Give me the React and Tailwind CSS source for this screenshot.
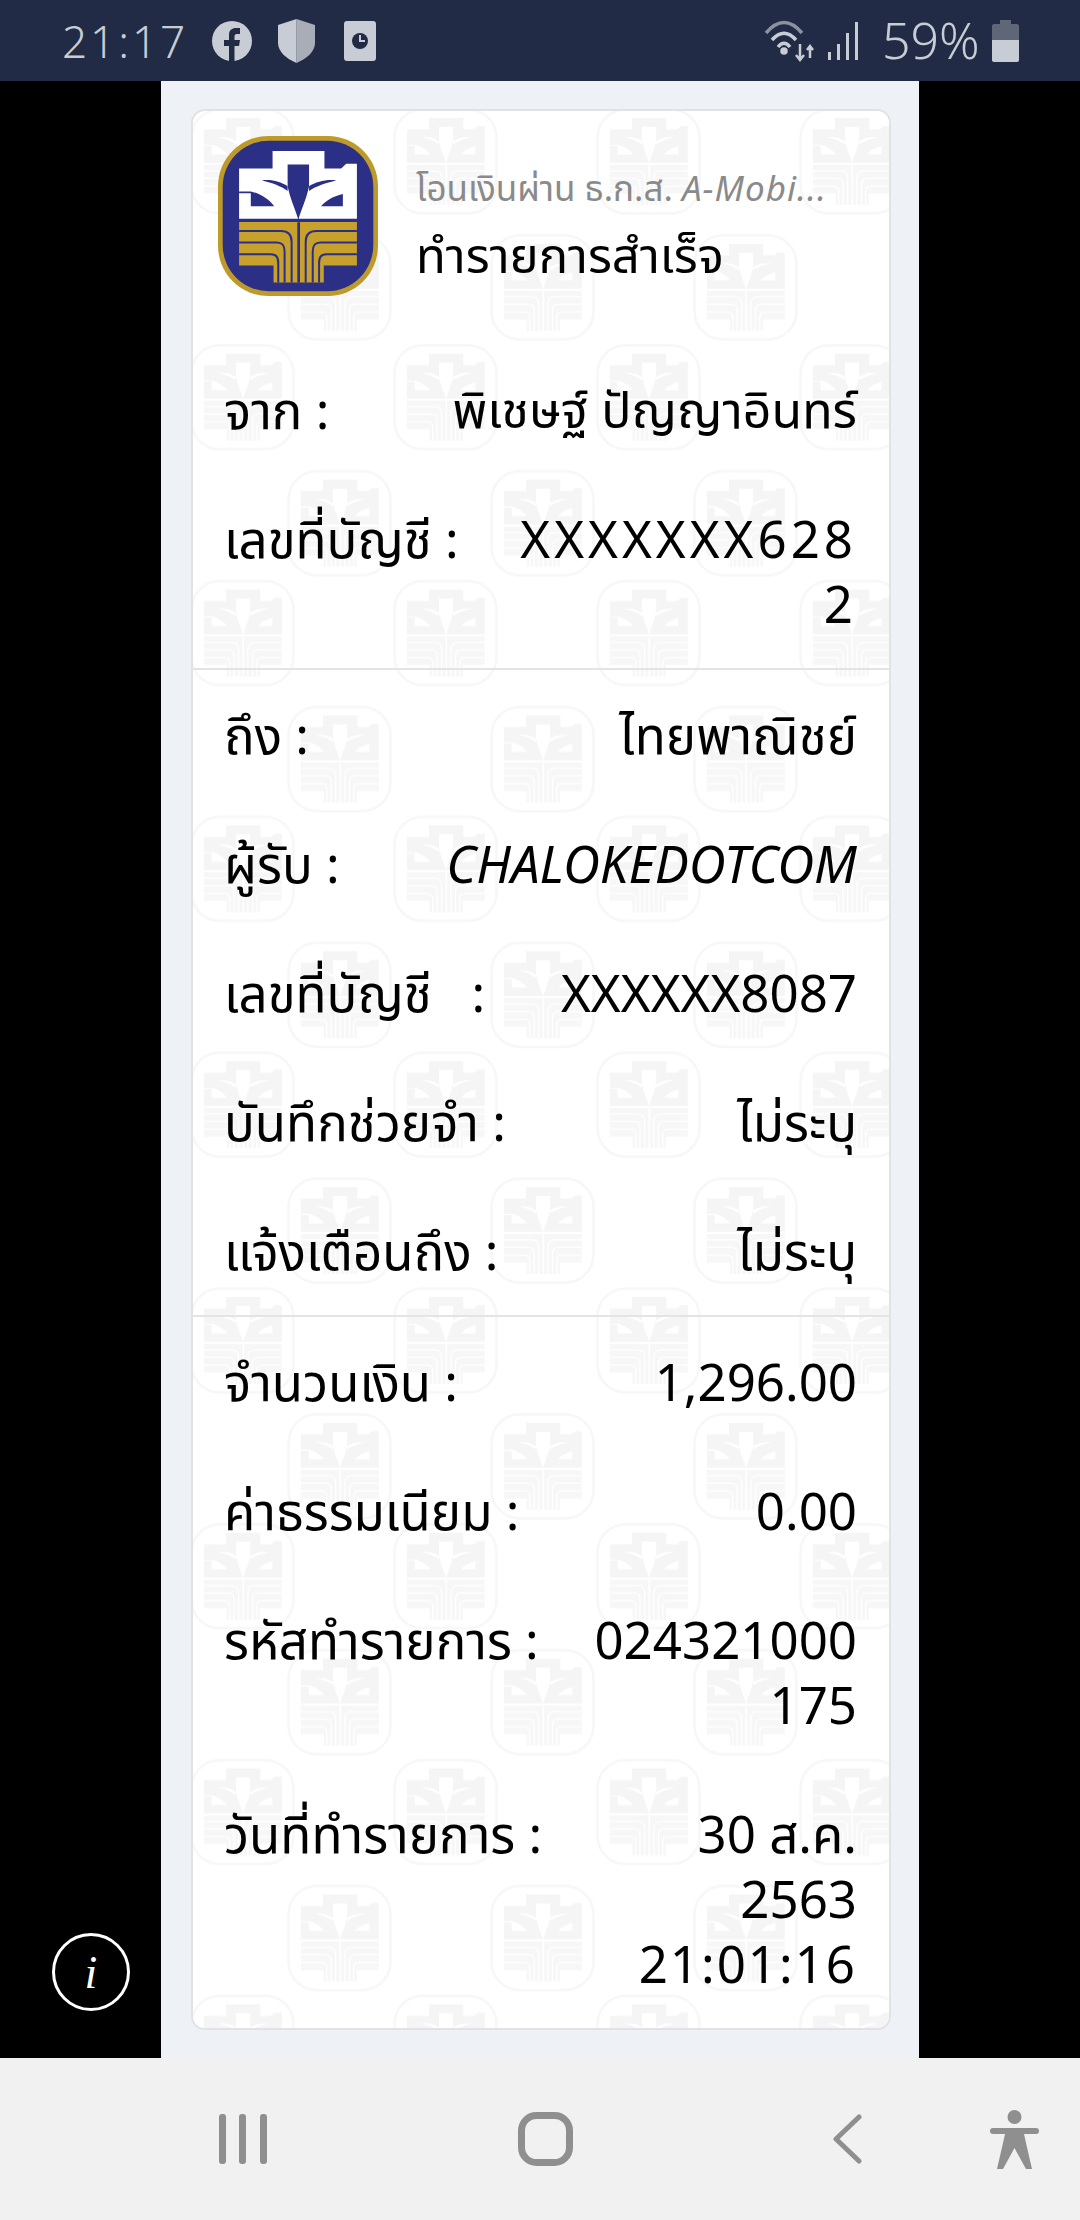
import React from 'react';

const FONT = "font-['Noto_Sans','Noto_Sans_Thai','Liberation_Sans',sans-serif]";

// drawn in the coordinates of the logo crop, 82,50 is its top left corner
function LogoMark({ white, wedge, gold, line }) {
    return (
        <g transform="translate(-82 -50)">
            <path d="M145 147H245V95H400V147H450L465 133H497V297H145Z" fill={white} />
            <path d="M290 135H354V200C346 240 330 270 322 300C314 270 298 240 290 200Z" fill={wedge} />
            <path d="M213 183C240 178 268 186 290 200V214C270 200 245 190 213 183Z" fill={wedge} />
            <path d="M435 183C410 178 376 186 354 200V214C375 200 405 190 435 183Z" fill={wedge} />
            <path d="M145 216H180C210 222 235 240 250 260H180V221H145Z" fill={wedge} />
            <path d="M455 223C425 230 400 245 390 260H455Z" fill={wedge} />
            <path d="M145 307H497V437H398V488H248V437H145Z" fill={gold} />
            <g fill="none" stroke={line} strokeWidth="6">
                <path d="M145 334H270C292 334 302 344 302 366V488" />
                <path d="M145 368H258C276 368 281 378 281 396V488" />
                <path d="M145 403H240C256 403 262 412 262 428V488" />
                <path d="M497 334H376C354 334 344 344 344 366V488" />
                <path d="M497 368H388C370 368 365 378 365 396V488" />
                <path d="M497 403H406C390 403 384 412 384 428V488" />
                <path d="M323 308V488" strokeWidth="8" />
            </g>
        </g>
    );
}

function Logo() {
    return (
        <svg viewBox="0 0 478 478" className="w-[160px] h-[160px] shrink-0">
            <rect x="0" y="0" width="478" height="478" rx="150" fill="#bd9a2a" />
            <rect x="14" y="14" width="450" height="450" rx="138" fill="#2b2f86" />
            <LogoMark white="#ffffff" wedge="#2b2f86" gold="#c8a02c" line="#2b2f86" />
        </svg>
    );
}

function Watermark() {
    const tile = (
        <>
            <rect x="1.500" y="1.500" width="102" height="104" rx="28" fill="#ffffff" stroke="#f7f7f7" strokeWidth="2.500" />
            <g transform="scale(0.221)">
                <LogoMark white="#f5f5f5" wedge="#ffffff" gold="#f7f7f7" line="#ffffff" />
            </g>
        </>
    );
    return (
        <svg className="absolute inset-0 w-full h-full" aria-hidden="true">
            <defs>
                <pattern id="wm" x="-3" y="-3" width="203" height="235.800" patternUnits="userSpaceOnUse">
                    <g>{tile}</g>
                    <g transform="translate(97 126)">{tile}</g>
                    <g transform="translate(-106 126)">{tile}</g>
                </pattern>
            </defs>
            <rect width="100%" height="100%" fill="url(#wm)" />
        </svg>
    );
}

function Row({ label, lines, divider, lineClass = '' }) {
    return (
        <div className={`flex justify-between pl-[31px] pr-[32px] py-[32px] ${divider ? 'border-b-2 border-[#e4e4e4]' : ''}`}>
            <div className="whitespace-pre">{label}</div>
            <div className={`text-right whitespace-nowrap ${lineClass}`}>
                {lines.map((l, i) => <div key={i}>{l}</div>)}
            </div>
        </div>
    );
}

function StatusBar() {
    return (
        <div className="h-[81px] bg-[#212b45] flex items-center text-[#c8ccd4] shrink-0 pl-[62px] pr-[61px]">
            <span className="text-[44px] font-light tracking-[3px] w-[150px]">21:17</span>
            <svg viewBox="0 0 40 40" className="w-[40px] h-[40px]">
                <circle cx="20" cy="20" r="20" fill="#c8ccd4" />
                <path d="M17 40V25H12V19H17V14C17 9 20 7 24 7H28V13H25C23 13 22.500 14 22.500 15.500V19H28L27 25H22.500V40Z" fill="#212b45" />
            </svg>
            <svg viewBox="0 0 37 44" className="w-[37px] h-[44px] ml-[26px]">
                <path d="M18.500 0L37 6V24C37 33 28 40 18.500 44Z" fill="#a8adb8" />
                <path d="M18.500 0L0 6V24C0 33 9 40 18.500 44Z" fill="#c8ccd4" />
            </svg>
            <svg viewBox="0 0 32 40" className="w-[32px] h-[40px] ml-[29px]">
                <rect width="32" height="40" rx="3" fill="#c8ccd4" />
                <circle cx="16" cy="20" r="8" fill="#212b45" />
                <path d="M15 14H17V19H21V21H15Z" fill="#c8ccd4" />
            </svg>
            <div className="flex-1" />
            <svg viewBox="0 0 53 42" className="w-[53px] h-[42px]" fill="none" stroke="#c8ccd4" strokeWidth="3.500">
                <path d="M2 13C14 -1 26 -1 38 13" stroke="#8b91a0" />
                <path d="M8 20C16 11 24 11 32 20" />
                <path d="M14 27C18 22 22 22 26 27" />
                <circle cx="20" cy="31" r="2" fill="#c8ccd4" />
                <path d="M36 24V40M32 35L36 40L40 35M46 38V26M43 30L46 26L49 30" strokeWidth="2.500" />
            </svg>
            <svg viewBox="0 0 36 38" className="w-[36px] h-[38px] ml-[11px]" fill="#c8ccd4">
                <rect x="0" y="30" width="3" height="8" />
                <rect x="9" y="22" width="3" height="16" />
                <rect x="18" y="11" width="3" height="27" />
                <rect x="27" y="0" width="3" height="38" />
            </svg>
            <span className="text-[50px] font-light ml-[18px] w-[100px] whitespace-nowrap">59%</span>
            <svg viewBox="0 0 27 42" className="w-[27px] h-[42px] ml-[10px]">
                <path d="M8 0H19V4H25C26 4 27 5 27 6V40C27 41 26 42 25 42H2C1 42 0 41 0 40V6C0 5 1 4 2 4H8Z" fill="#5f6678" />
                <path d="M0 20H27V40C27 41 26 42 25 42H2C1 42 0 41 0 40Z" fill="#c8ccd4" />
            </svg>
        </div>
    );
}

function NavBar() {
    return (
        <div className="h-[162px] bg-[#f1f1f1] shrink-0">
            <div className="flex items-center h-full">
                <svg viewBox="0 0 48 50" className="w-[48px] h-[50px] ml-[219px]" fill="#8f8f8f">
                    <rect x="0" y="0" width="7" height="50" rx="3" />
                    <rect x="20" y="0" width="7" height="50" rx="3" />
                    <rect x="41" y="0" width="7" height="50" rx="3" />
                </svg>
                <svg viewBox="0 0 55 54" className="w-[55px] h-[54px] ml-[251px]" fill="none" stroke="#8f8f8f" strokeWidth="7">
                    <rect x="3.500" y="3.500" width="48" height="47" rx="15" />
                </svg>
                <svg viewBox="0 0 30 50" className="w-[30px] h-[50px] ml-[259px]" fill="none" stroke="#8f8f8f" strokeWidth="5" strokeLinecap="round" strokeLinejoin="round">
                    <path d="M27 3L4 25L27 47" />
                </svg>
                <svg viewBox="0 0 49 59" className="w-[49px] h-[59px] ml-[128px]" fill="#8f8f8f">
                    <circle cx="24.500" cy="7" r="7" />
                    <path d="M3 18H46C48 18 49 19 49 21C49 23 48 24 46 24H34L36 33L42 59H36L24.500 38L13 59H7L13 33L15 24H3C1 24 0 23 0 21C0 19 1 18 3 18Z" />
                </svg>
            </div>
        </div>
    );
}

export default function App() {
    return (
        <div className={`w-[1080px] h-[2220px] flex flex-col overflow-hidden ${FONT}`}>
            <StatusBar />
            <div className="flex-1 bg-black relative flex justify-center">
                <div className="w-[758px] bg-[#eef2f6] pt-[28px] pl-[30px] pr-[28px] pb-[28px]">
                    <div className="relative h-full bg-white rounded-[14px] border-2 border-[#e2e2e2] overflow-hidden text-[51px] leading-[65px] text-black">
                        <Watermark />
                        <div className="relative">
                            <div className="flex items-center gap-[38px] pl-[25px] pt-[25px] pb-[49px]">
                                <Logo />
                                <div className="pt-[16px]">
                                    <div className="text-[#8a8a8a] text-[35px] leading-[44px] whitespace-nowrap">โอนเงินผ่าน ธ.ก.ส. <span className="italic tracking-[1px]">A-Mobi...</span></div>
                                    <div className="text-[49px] leading-[56px] mt-[16px] whitespace-nowrap">ทำรายการสำเร็จ</div>
                                </div>
                            </div>
                            <Row label="จาก :" lines={['พิเชษฐ์ ปัญญาอินทร์']} lineClass="text-[50px]" />
                            <Row label="เลขที่บัญชี :" lines={['XXXXXXX628', '2']} lineClass="tracking-[4px]" divider />
                            <Row label="ถึง :" lines={['ไทยพาณิชย์']} />
                            <Row label="ผู้รับ :" lines={['CHALOKEDOTCOM']} lineClass="italic" />
                            <Row label="เลขที่บัญชี   :" lines={['XXXXXX8087']} />
                            <Row label="บันทึกช่วยจำ :" lines={['ไม่ระบุ']} />
                            <Row label="แจ้งเตือนถึง :" lines={['ไม่ระบุ']} divider />
                            <Row label="จำนวนเงิน :" lines={['1,296.00']} />
                            <Row label="ค่าธรรมเนียม :" lines={['0.00']} />
                            <Row label="รหัสทำรายการ :" lines={['024321000', '175']} />
                            <Row label="วันที่ทำรายการ :" lines={['30 ส.ค.', '2563', <span className="tracking-[2px]">21:01:16</span>]} />
                        </div>
                    </div>
                </div>
                <div className="absolute left-[52px] top-[1852px] w-[78px] h-[78px] rounded-full border-[3px] border-white flex items-center justify-center text-white italic font-medium text-[46px] font-['Liberation_Serif',serif]">i</div>
            </div>
            <NavBar />
        </div>
    );
}
